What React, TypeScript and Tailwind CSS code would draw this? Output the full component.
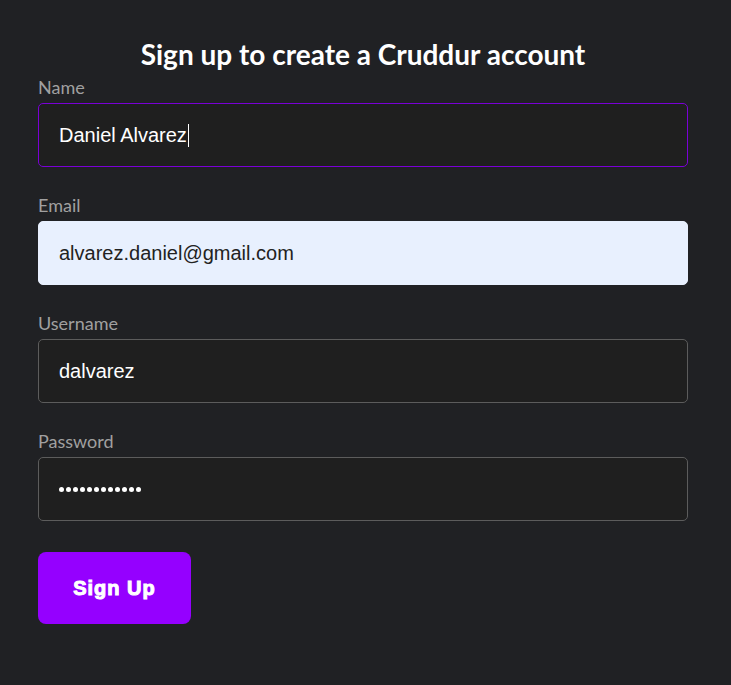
import { useState } from "react";

const fields = [
  { label: "Name", name: "name", type: "text", value: "Daniel Alvarez" },
  { label: "Email", name: "email", type: "text", value: "alvarez.daniel@gmail.com" },
  { label: "Username", name: "username", type: "text", value: "dalvarez" },
  { label: "Password", name: "password", type: "password", value: "............" },
];

export default function App() {
  const [values, setValues] = useState<Record<string, string>>(
    Object.fromEntries(fields.map((f) => [f.name, f.value]))
  );

  return (
    <div className="min-h-[685px] w-full bg-[#202124] px-[38px] pt-[36px] font-['Lato','Open_Sans',sans-serif]">
      <form className="w-[650px]" onSubmit={(e) => e.preventDefault()}>
        <h2 className="text-center text-[28px] font-bold leading-[36px] text-white">
          Sign up to create a Cruddur account
        </h2>

        <div className="mt-[3px] flex flex-col gap-[26px]">
          {fields.map((f) => {
            const autofill = f.name === "email";
            const focused = f.name === "name";
            return (
              <div key={f.name}>
                <label className="block h-[28px] text-[18px] leading-[24px] text-[#a0a0a0]">
                  {f.label}
                </label>
                <div
                  className={`flex h-[64px] items-center rounded-[5px] border pl-[20px] font-['Liberation_Sans',Arial,sans-serif] text-[20px] ${
                    autofill
                      ? "border-[#e8f0fe] bg-[#e8f0fe] text-[#222]"
                      : focused
                      ? "border-[#7a00d6] bg-[#1f1f1f] text-white"
                      : "border-[#5c5c5c] bg-[#1f1f1f] text-white"
                  }`}
                >
                  {f.type === "password" ? (
                    <span className="flex gap-[2px]">
                      {Array.from({ length: values[f.name].length }).map((_, k) => (
                        <span key={k} className="h-[5px] w-[5px] rounded-full bg-white" />
                      ))}
                    </span>
                  ) : (
                    <span>{values[f.name]}</span>
                  )}
                  {focused && <span className="ml-[1px] h-[23px] w-px bg-white" />}
                </div>
              </div>
            );
          })}
        </div>

        <button
          type="submit"
          onClick={() => setValues({ ...values })}
          className="mt-[31px] h-[72px] w-[153px] rounded-[8px] bg-[#9500ff] font-['Liberation_Sans',Arial,sans-serif] text-[20px] font-black tracking-[1px] text-white [-webkit-text-stroke:1px_white]"
        >
          Sign Up
        </button>
      </form>
    </div>
  );
}
